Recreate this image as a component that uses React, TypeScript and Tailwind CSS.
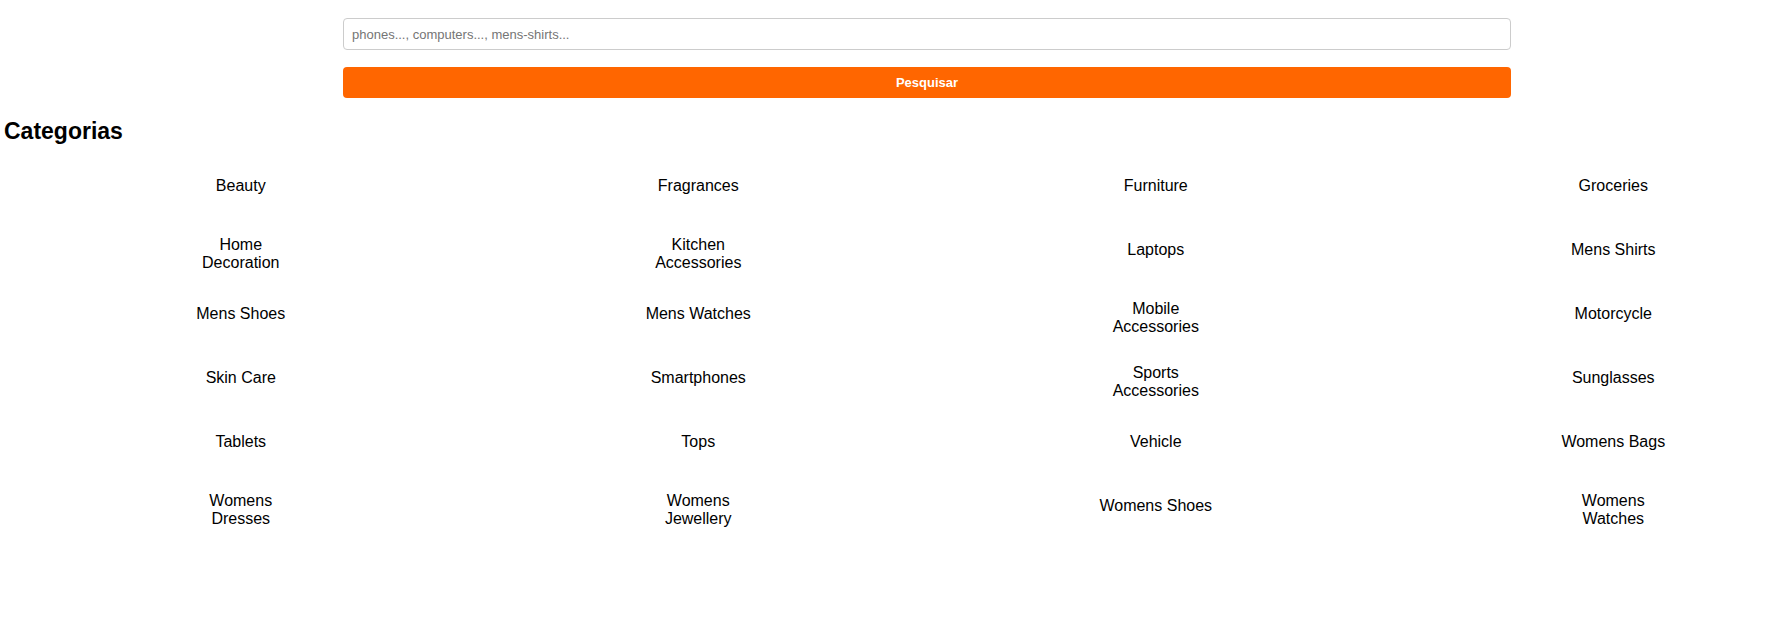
const categories = [
  "Beauty",
  "Fragrances",
  "Furniture",
  "Groceries",
  "Home Decoration",
  "Kitchen Accessories",
  "Laptops",
  "Mens Shirts",
  "Mens Shoes",
  "Mens Watches",
  "Mobile Accessories",
  "Motorcycle",
  "Skin Care",
  "Smartphones",
  "Sports Accessories",
  "Sunglasses",
  "Tablets",
  "Tops",
  "Vehicle",
  "Womens Bags",
  "Womens Dresses",
  "Womens Jewellery",
  "Womens Shoes",
  "Womens Watches",
];

export default function App() {
  return (
    <div className="w-full min-h-[642px] overflow-x-hidden bg-white text-black font-['Liberation_Sans',Arial,sans-serif]">
      <div className="w-[1854px]">
        {/* Search */}
        <form
          className="flex flex-col items-center pt-[18px]"
          onSubmit={(e) => e.preventDefault()}
        >
          <input
            type="text"
            placeholder="phones..., computers..., mens-shirts..."
            className="w-[1168px] h-[32px] px-2 text-[13px] border border-[#cccccc] rounded-[4px] outline-none placeholder:text-[#757575]"
          />
          <button
            type="submit"
            className="mt-[17px] w-[1168px] h-[31px] rounded-[4px] bg-[#ff6600] text-white text-[13px] font-bold"
          >
            Pesquisar
          </button>
        </form>

        {/* Categories */}
        <h2 className="mt-[19px] pl-1 text-[23px] font-bold leading-[28px]">Categorias</h2>

        <div className="ml-[12px] mt-[13px] grid grid-cols-[repeat(4,457.5px)] auto-rows-[64px]">
          {categories.map((name) => (
            <div key={name} className="flex items-center justify-center">
              <span className="w-[118px] min-h-[27px] text-center text-[16px] leading-[18px]">{name}</span>
            </div>
          ))}
        </div>
      </div>
    </div>
  );
}
